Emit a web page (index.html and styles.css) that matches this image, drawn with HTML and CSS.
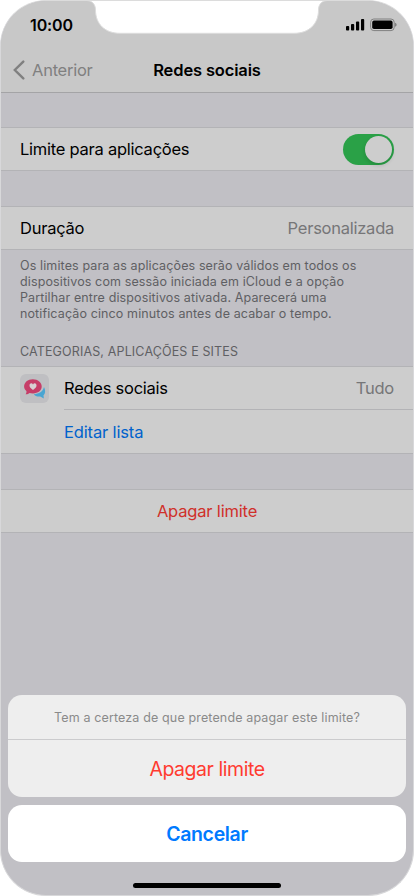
FILE: index.html
```html
<!DOCTYPE html>
<html lang="pt">
<head>
  <meta charset="utf-8">
  <title>Redes sociais</title>
  <link rel="stylesheet" href="styles.css">
</head>
<body>
  <div class="phone">
    <svg class="notch" viewBox="0 0 414 36" width="414" height="36">
      <path d="M86 -1 V0.5 C92 0.5 95.5 4 95.5 10 C95.5 24 105 33.3 120 33.3 H294 C309 33.3 318.5 24 318.5 10 C318.5 4 322 0.5 328 0.5 V-1 Z" fill="#fff" stroke="#dcdcdc"/>
    </svg>

    <div class="status-bar">
      <span class="time">10:00</span>
      <svg class="status-icons" viewBox="0 0 52 14" width="52" height="14">
        <rect x="1" y="8" width="3.2" height="4.4" rx="0.9"/>
        <rect x="6" y="6" width="3.2" height="6.4" rx="0.9"/>
        <rect x="11" y="3.6" width="3.2" height="8.8" rx="0.9"/>
        <rect x="16" y="1" width="3.2" height="11.4" rx="0.9"/>
        <rect x="25.6" y="1" width="23.6" height="11.6" rx="3.2" fill="none" stroke="#808080"/>
        <rect x="27.2" y="2.6" width="20.4" height="8.4" rx="1.8"/>
        <path d="M50.2 4.8 C52 5.6 52 8 50.2 8.8 Z" fill="#707070"/>
      </svg>
    </div>

    <div class="nav">
      <div class="back">
        <svg viewBox="0 0 12 20" width="12" height="20"><path d="M10.3 1.6 L1.8 10 L10.3 18.4" fill="none" stroke="#808080" stroke-width="2.4" stroke-linecap="round"/></svg>
        <span class="back-text">Anterior</span>
      </div>
      <h1 class="title">Redes sociais</h1>
    </div>

    <div class="content">
      <div class="group">
        <div class="row">
          <span class="label">Limite para aplicações</span>
          <span class="switch"><span class="knob"></span></span>
        </div>
      </div>

      <div class="group">
        <div class="row">
          <span class="label">Duração</span>
          <span class="value">Personalizada</span>
        </div>
      </div>
      <p class="note">
        Os limites para as aplicações serão válidos em todos os<br>
        dispositivos com sessão iniciada em iCloud e a opção<br>
        Partilhar entre dispositivos ativada. Aparecerá uma<br>
        notificação cinco minutos antes de acabar o tempo.
      </p>

      <h2 class="caption">CATEGORIAS, APLICAÇÕES E SITES</h2>
      <div class="group">
        <div class="row">
          <svg class="app-icon" viewBox="0 0 29 29" width="29" height="29">
            <rect width="29" height="29" rx="6" fill="#bfbfc2"/>
            <path d="M24 13 C26 17 25 20 23.5 21.2 L23.8 24.5 L20.2 22.5 C17 22.8 15 21.8 13.8 20.2 C19 20 23 17.5 24 13 Z" fill="#49a5d2"/>
            <path d="M12.8 5.3 C18 5.3 21.7 8.6 21.7 12.6 C21.7 16.8 18 19.4 13 19.4 C11.6 19.4 10.5 19.2 9.5 18.9 C8.5 20 7 20.5 5.6 20.3 C6.4 19.3 6.6 18.2 6.4 17 C4.9 15.9 4.1 14.4 4.1 12.5 C4.1 8.5 7.8 5.3 12.8 5.3 Z" fill="#c63d68"/>
            <path d="M13 16 C10.7 14.2 9.5 13 9.5 11.4 C9.5 9.2 12 8.6 13 10.4 C14 8.6 16.5 9.2 16.5 11.4 C16.5 13 15.3 14.2 13 16 Z" fill="#d8cfd3"/>
          </svg>
          <span class="label">Redes sociais</span>
          <span class="value">Tudo</span>
        </div>
        <div class="row edit-row">
          <span class="edit">Editar lista</span>
        </div>
      </div>

      <div class="group">
        <div class="row center">
          <span class="delete">Apagar limite</span>
        </div>
      </div>
    </div>

    <div class="sheet">
      <div class="sheet-box">
        <div class="sheet-message">Tem a certeza de que pretende apagar este limite?</div>
        <div class="sheet-delete">Apagar limite</div>
      </div>
      <div class="sheet-cancel">Cancelar</div>
    </div>
    <div class="home-bar"></div>
  </div>
</body>
</html>
```

FILE: styles.css
```css
* {
  box-sizing: border-box;
}

body {
  margin: 0;
  background: #fff;
  font-family: Inter, "Liberation Sans", sans-serif;
  color: #000;
}

.phone {
  position: relative;
  display: flex;
  flex-direction: column;
  width: 414px;
  height: 896px;
  overflow: hidden;
  border: 1px solid #d8d8da;
  border-top-color: #dcdcdc;
  border-radius: 46px;
  background: #c1c0c5;
}

.notch {
  position: absolute;
  top: -1px;
  left: -1px;
}

.status-bar {
  display: flex;
  justify-content: space-between;
  align-items: center;
  height: 47px;
  padding: 0 16px 0 29px;
  background: #c8c8c8;
}

.time {
  font-size: 16px;
  font-weight: 600;
  letter-spacing: -0.1px;
}

.nav {
  display: grid;
  grid-template-columns: 1fr auto 1fr;
  align-items: center;
  height: 45px;
  padding: 0 12px;
  background: #c8c8c8;
  border-bottom: 1px solid #a4a4a6;
}

.back {
  display: flex;
  align-items: center;
  gap: 7px;
  color: #808080;
  font-size: 16.5px;
  letter-spacing: -0.25px;
}

.title {
  margin: 0;
  font-size: 16.5px;
  font-weight: 600;
  letter-spacing: -0.15px;
}

.content {
  flex: 1;
  padding-top: 34px;
}

.group {
  margin-bottom: 35px;
  background: #cdcdcd;
  border-top: 1px solid #b3b3b6;
  border-bottom: 1px solid #b3b3b6;
}

.row {
  display: flex;
  align-items: center;
  height: 42px;
  padding: 0 19px;
  font-size: 16.5px;
  letter-spacing: -0.25px;
}

.value {
  margin-left: auto;
  color: #767678;
}

.switch {
  display: flex;
  justify-content: flex-end;
  width: 51px;
  height: 31px;
  margin-left: auto;
  padding: 2px;
  border-radius: 16px;
  background: #2aa147;
}

.knob {
  width: 27px;
  height: 27px;
  border-radius: 50%;
  background: #cdcdcd;
  box-shadow: 0 2px 4px rgba(0, 0, 0, 0.15);
}

.note {
  margin: -27px 19px 0;
  color: #5f5f63;
  font-size: 12.5px;
  line-height: 16px;
  letter-spacing: 0.12px;
  white-space: nowrap;
}

.caption {
  margin: 22px 19px 7px;
  color: #5f5f63;
  font-size: 12.5px;
  font-weight: 400;
  line-height: 15px;
  letter-spacing: 0.14px;
}

.app-icon {
  margin-right: 15px;
}

.edit-row {
  height: 44px;
  margin-left: 63px;
  padding: 0;
  border-top: 1px solid #b3b3b6;
}

.edit {
  color: #0062cc;
  letter-spacing: -0.15px;
}

.center {
  justify-content: center;
}

.delete {
  color: #d0302a;
  letter-spacing: -0.17px;
}

.sheet {
  position: absolute;
  right: 7px;
  bottom: 33px;
  left: 7px;
  display: flex;
  flex-direction: column;
  gap: 8px;
}

.sheet-box {
  height: 102px;
  border-radius: 14px;
  background: #eee;
}

.sheet-message,
.sheet-delete,
.sheet-cancel {
  display: flex;
  align-items: center;
  justify-content: center;
}

.sheet-message {
  height: 45px;
  padding-top: 1px;
  border-bottom: 1px solid #cbcbcd;
  color: #8a8a8a;
  font-size: 12.5px;
  letter-spacing: 0.14px;
}

.sheet-delete {
  height: 57px;
  color: #ff3b30;
  font-size: 19.5px;
  letter-spacing: -0.45px;
}

.sheet-cancel {
  height: 57px;
  border-radius: 14px;
  background: #fff;
  color: #007aff;
  font-size: 19.5px;
  font-weight: 600;
  letter-spacing: -0.35px;
}

.home-bar {
  position: absolute;
  bottom: 7px;
  left: 132px;
  width: 148px;
  height: 5px;
  border-radius: 3px;
  background: #000;
}
```
